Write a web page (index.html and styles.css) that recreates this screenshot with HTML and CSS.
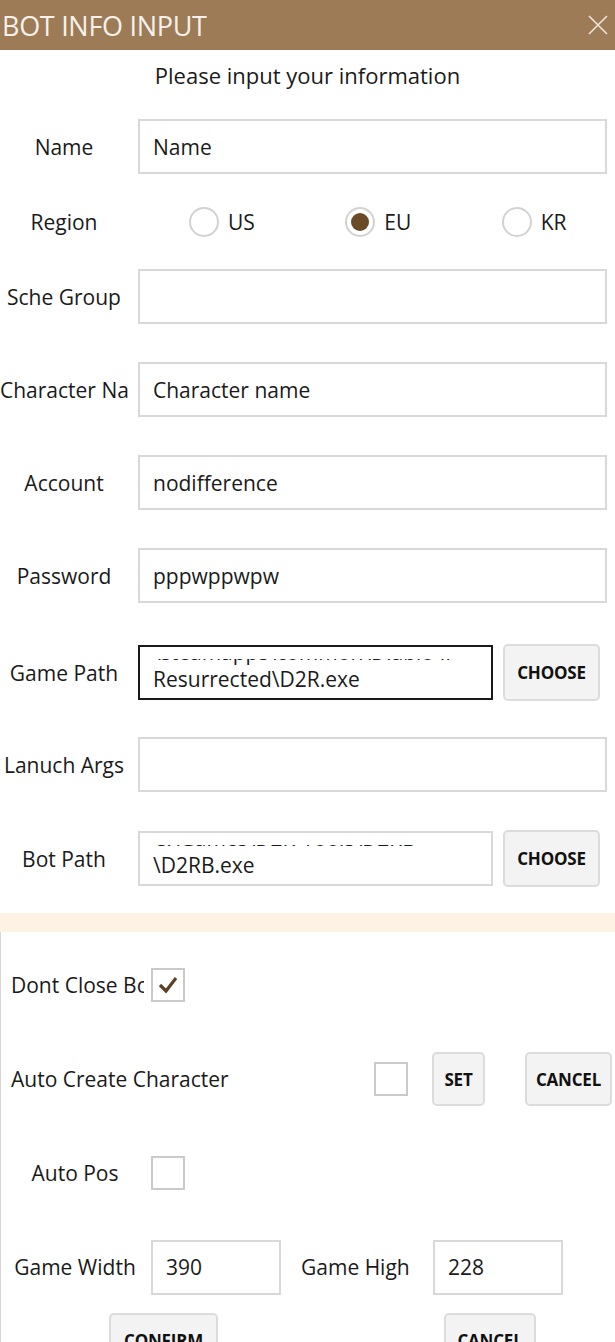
FILE: index.html
```html
<!DOCTYPE html>
<html lang="en">
<head>
  <meta charset="UTF-8" />
  <title>Bot Info Input</title>
  <link rel="stylesheet" href="styles.css">
</head>
<body>
  <div class="window">
    <header class="titlebar">
      <span class="title">BOT INFO INPUT</span>
      <span class="close">
        <svg width="22" height="22" viewBox="0 0 22 22"><path d="M2 2 L20 20 M20 2 L2 20" stroke="#efe6da" stroke-width="1.6" fill="none"/></svg>
      </span>
    </header>

    <p class="subtitle">Please input your information</p>

    <div class="form">
      <div class="group group-top">
        <div class="row">
          <span class="label"><span>Name</span></span>
          <div class="field">Name</div>
        </div>
        <div class="row">
          <span class="label"><span>Region</span></span>
          <div class="radios">
            <span class="radio-item"><span class="radio"></span>US</span>
            <span class="radio-item"><span class="radio checked"></span>EU</span>
            <span class="radio-item"><span class="radio"></span>KR</span>
          </div>
        </div>
        <div class="row">
          <span class="label"><span>Sche Group</span></span>
          <div class="field"></div>
        </div>
      </div>

      <div class="group group-main">
        <div class="row">
          <span class="label start"><span>Character Name</span></span>
          <div class="field">Character name</div>
        </div>
        <div class="row">
          <span class="label"><span>Account</span></span>
          <div class="field">nodifference</div>
        </div>
        <div class="row">
          <span class="label"><span>Password</span></span>
          <div class="field">pppwppwpw</div>
        </div>
        <div class="row row-path game-path">
          <span class="label"><span>Game Path</span></span>
          <div class="field path-box focused">
            <div class="path-scroll">
              <span>\steamapps\common\Diablo II</span>
              <span>Resurrected\D2R.exe</span>
            </div>
          </div>
          <button class="btn">CHOOSE</button>
        </div>
        <div class="row">
          <span class="label"><span>Lanuch Args</span></span>
          <div class="field"></div>
        </div>
        <div class="row row-path">
          <span class="label"><span>Bot Path</span></span>
          <div class="field path-box">
            <div class="path-scroll">
              <span>C:\Games\D2R-Tools\D2RB</span>
              <span>\D2RB.exe</span>
            </div>
          </div>
          <button class="btn">CHOOSE</button>
        </div>
      </div>
    </div>

    <div class="band"></div>

    <div class="options">
      <div class="opt-row">
        <span class="opt-label clip">Dont Close Bot Window</span>
        <span class="check checked">
          <svg width="22" height="22" viewBox="0 0 22 22"><path d="M3 11 L9 17 L19 4" stroke="#5b4127" stroke-width="3.2" fill="none"/></svg>
        </span>
      </div>
      <div class="opt-row">
        <span class="opt-label grow">Auto Create Character</span>
        <span class="check"></span>
        <button class="btn btn-set">SET</button>
        <button class="btn btn-cancel">CANCEL</button>
      </div>
      <div class="opt-row">
        <span class="opt-label center">Auto Pos</span>
        <span class="check"></span>
      </div>
      <div class="opt-row">
        <span class="opt-label center">Game Width</span>
        <div class="field small">390</div>
        <span class="opt-label high">Game High</span>
        <div class="field small">228</div>
      </div>
      <div class="opt-row actions">
        <button class="btn btn-confirm">CONFIRM</button>
        <button class="btn btn-close">CANCEL</button>
      </div>
    </div>
  </div>
</body>
</html>
```

FILE: styles.css
```css
* {
  margin: 0; padding: 0; box-sizing: border-box;
}
body {
  width: 615px; height: 1342px; overflow: hidden;
  background: #fff; color: #1a1a1a;
  font-family: 'Open Sans', 'Noto Sans', sans-serif;
  font-size: 21px;
}
.titlebar {
  height: 50px; background: #9c7b56;
  display: flex; align-items: center; justify-content: space-between;
  padding: 0 6px 0 2px;
}
.title {
  color: #f6f1ea; font-size: 27px; letter-spacing: -0.3px;
}
.close {
  display: flex; width: 22px; height: 22px;
}
.subtitle {
  height: 50px; line-height: 50px; text-align: center;
  font-size: 22px;
}
.form {
  display: flex; flex-direction: column; gap: 38px;
  padding-top: 19px;
}
.group {
  display: flex; flex-direction: column;
}
.group-top { gap: 20px; }
.group-main { gap: 38px; }
.row {
  display: grid; grid-template-columns: 128px 1fr;
  column-gap: 10px; height: 55px; padding-right: 8px;
  align-items: center;
}
.row-path {
  grid-template-columns: 128px 1fr 97px;
  padding-right: 15px;
}
.game-path {
  margin-top: 3px;
}
.label {
  display: flex; justify-content: center;
  overflow: hidden; white-space: nowrap;
}
.label.start {
  justify-content: flex-start;
}
.field {
  height: 55px; border: 2px solid #d9d9d9; background: #fff;
  padding: 0 13px; display: flex; align-items: center;
  white-space: nowrap; overflow: hidden;
}
.field.focused {
  border-color: #1a1a1a;
}
.path-box {
  padding: 12px 13px 5px; align-items: stretch;
}
.path-scroll {
  flex: 1; overflow: hidden; line-height: 27px;
  display: flex; flex-direction: column; justify-content: flex-end;
}
.radios {
  display: grid; grid-template-columns: repeat(3, 1fr);
}
.radio-item {
  display: flex; align-items: center; gap: 9px; padding-left: 51px;
}
.radio {
  width: 30px; height: 30px; border-radius: 50%;
  border: 2px solid #d2d2d2; background: #fff;
  display: flex; align-items: center; justify-content: center;
}
.radio.checked::after {
  content: ""; width: 18px; height: 18px; border-radius: 50%;
  background: #6b4a27;
}
.btn {
  height: 57px; background: #f3f3f3; color: #111;
  border: 2px solid #dcdcdc; border-radius: 5px;
  font-family: inherit; font-size: 17px; font-weight: 700;
  letter-spacing: -0.2px;
}
.band {
  height: 19px; background: #fdf2e4; margin-top: 28px;
}
.options {
  border-left: 1px solid #d6d6d6;
  padding: 26px 3px 0 10px;
  display: flex; flex-direction: column; gap: 40px;
}
.opt-row {
  display: flex; align-items: center; height: 54px;
}
.opt-label {
  white-space: nowrap;
}
.opt-label.clip {
  width: 133px; overflow: hidden; margin-right: 7px;
}
.opt-label.grow {
  flex: 1;
}
.opt-label.center {
  width: 128px; text-align: center; margin-right: 12px;
}
.opt-label.high {
  width: 112px; margin: 0 20px;
}
.check {
  width: 34px; height: 34px; border: 2px solid #cacaca; background: #fff;
  display: flex; align-items: center; justify-content: center;
}
.field.small {
  width: 130px;
}
.btn-set {
  width: 53px; height: 54px; margin-left: 24px;
}
.btn-cancel {
  width: 87px; height: 54px; margin-left: 40px;
}
.actions {
  margin-top: -21px; padding-left: 98px; align-items: flex-start;
}
.btn-confirm {
  width: 109px; height: 54px;
}
.btn-close {
  width: 92px; height: 54px; margin-left: 226px;
}
```
